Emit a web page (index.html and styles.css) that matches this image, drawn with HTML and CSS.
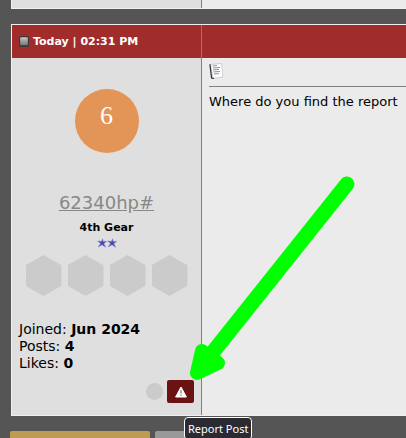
FILE: index.html
```html
<!DOCTYPE html>
<html lang="en">
<head>
    <meta charset="UTF-8">
    <meta name="viewport" content="width=device-width, initial-scale=1.0">
    <title>Forum Thread</title>
    <link rel="stylesheet" href="styles.css">
</head>
<body>
    <main class="thread">
        <div class="post post-previous">
            <div class="user-col"></div>
            <div class="message-col"></div>
        </div>
        <article class="post">
            <header class="post-head">
                <svg class="status-icon" viewBox="0 0 10 11" aria-hidden="true">
                    <defs>
                        <linearGradient id="status" x1="0" y1="0" x2="0" y2="1">
                            <stop offset="0" stop-color="#c8c8c8"/>
                            <stop offset="1" stop-color="#777"/>
                        </linearGradient>
                    </defs>
                    <rect x="0" y="0" width="10" height="11" rx="2" fill="#3a3a3a"/>
                    <rect x="1.2" y="1.2" width="7.6" height="8" rx="1" fill="url(#status)"/>
                </svg>
                <span>Today | 02:31 PM</span>
            </header>
            <div class="post-head"></div>
            <section class="user-col">
                <div class="avatar">6</div>
                <a class="username" href="#">62340hp#</a>
                <div class="rank">4th Gear</div>
                <svg class="stars" viewBox="0 0 20 10" aria-hidden="true">
                    <g fill="#4a4ab0" stroke="#6f6fc8" stroke-width="0.4">
                        <path id="star" d="M5.6 0.8 L6 3.4 L9.6 3.4 L6.8 5.6 L8.6 9.2 L5 6.8 L1.2 9 L3.6 5.4 L0.6 3 L4.4 3.4 Z"/>
                        <use href="#star" x="10"/>
                    </g>
                </svg>
                <div class="badges">
                    <span class="hex"></span>
                    <span class="hex"></span>
                    <span class="hex"></span>
                    <span class="hex"></span>
                </div>
                <div class="user-info">
                    <div>Joined: <b>Jun 2024</b></div>
                    <div>Posts: <b>4</b></div>
                    <div>Likes: <b>0</b></div>
                </div>
                <div class="user-actions">
                    <span class="online-dot"></span>
                    <button type="button" class="report" aria-label="Report Post">
                        <svg viewBox="0 0 12 12" aria-hidden="true">
                            <path d="M6 1 L11.4 11 H0.6 Z" fill="#fff" stroke="#fff" stroke-linejoin="round"/>
                            <path d="M6 4.2 V7.6 M6 8.6 V9.8" stroke="#9a7468" stroke-width="1.3"/>
                        </svg>
                    </button>
                    <div class="tooltip" role="tooltip">Report Post</div>
                </div>
            </section>
            <section class="message-col">
                <svg class="post-icon" viewBox="0 0 16 16" aria-hidden="true">
                    <path d="M1.5 1.5 L12.5 0.5 L14 14 L4 15.5 Z" fill="#fff" stroke="#c4c4cc" stroke-width="0.8"/>
                    <path d="M0.9 1.2 L2.6 15 L5 15.4" fill="none" stroke="#2b2b3a" stroke-width="1.2"/>
                    <path d="M3.5 3 L8 2.6 M4 5 L11 4.4 M4 7 L10 6.4 M4.5 9 L11 8.4 M5 11 L10 10.6" stroke="#85858f" stroke-width="0.9"/>
                </svg>
                <hr>
                <p>Where do you find the report</p>
            </section>
            <svg class="pointer" viewBox="0 0 166 206" aria-hidden="true">
                <g fill="#00ff00" stroke="#00ff00" stroke-linecap="round" stroke-linejoin="round">
                    <path d="M158 8 L20 181" stroke-width="15"/>
                    <path d="M13 175 L29 187 L8 197 Z" stroke-width="14"/>
                </g>
            </svg>
        </article>
        <div class="thread-actions">
            <button type="button" class="reply" aria-label="Reply"></button>
            <button type="button" class="more" aria-label="More"></button>
        </div>
    </main>
</body>
</html>
```

FILE: styles.css
```css
        body {
            margin: 0;
            font-family: Verdana, "DejaVu Sans", sans-serif;
            font-size: 13px;
            line-height: 17px;
            color: #000;
            background-color: #555;
            overflow: hidden;
        }
        .thread {
            padding-left: 11px;
        }
        .post {
            position: relative;
            display: grid;
            grid-template-columns: 190px 1fr;
            border: 1px solid #f0eeee;
            border-right: none;
            margin-bottom: 15px;
            background-color: #ebebeb;
        }
        .post-previous {
            border-top: none;
            height: 8px;
        }
        .post-head {
            display: flex;
            align-items: center;
            gap: 4px;
            height: 33px;
            padding-left: 7px;
            background-color: #a02c2c;
            color: #fff;
            font-size: 11px;
            font-weight: bold;
        }
        header.post-head,
        .user-col {
            border-right: 1px solid #808080;
        }
        .status-icon {
            width: 10px;
            height: 11px;
        }
        .user-col {
            display: flex;
            flex-direction: column;
            align-items: center;
            background-color: #dfdfdf;
        }
        .avatar {
            box-sizing: border-box;
            width: 64px;
            height: 64px;
            margin-top: 31px;
            border-radius: 50%;
            background-color: #e39558;
            color: #fff;
            font-family: "Liberation Serif", serif;
            font-size: 26px;
            line-height: 54px;
            text-align: center;
        }
        .username {
            margin-top: 38px;
            color: #888;
            font-size: 18px;
            line-height: 24px;
        }
        .rank {
            margin-top: 4px;
            font-size: 11px;
            font-weight: bold;
        }
        .stars {
            width: 20px;
            height: 10px;
            margin-top: 2px;
        }
        .badges {
            display: flex;
            gap: 6px;
            margin-top: 7px;
        }
        .hex {
            width: 36px;
            height: 41px;
            background-color: #cbcbcb;
            clip-path: polygon(50% 0, 100% 25%, 100% 75%, 50% 100%, 0 75%, 0 25%);
        }
        .user-info {
            align-self: stretch;
            margin-top: 25px;
            padding-left: 7px;
            font-size: 14px;
        }
        .user-actions {
            position: relative;
            align-self: flex-end;
            display: flex;
            align-items: center;
            gap: 4px;
            margin: 8px 7px 12px 0;
        }
        .online-dot {
            width: 17px;
            height: 17px;
            border-radius: 50%;
            background-color: #cbcbcb;
        }
        .report {
            display: flex;
            align-items: center;
            justify-content: center;
            width: 27px;
            height: 23px;
            padding: 0;
            border: none;
            border-radius: 2px;
            background-color: #6b1313;
            cursor: pointer;
        }
        .report svg {
            width: 12px;
            height: 12px;
        }
        .tooltip {
            position: absolute;
            top: 37px;
            left: 38px;
            z-index: 2;
            padding: 2px 3px;
            border: 1px solid #fff;
            border-radius: 4px;
            background-color: #2b2a33;
            color: #fff;
            font-family: "Noto Sans", "Open Sans", sans-serif;
            font-size: 11px;
            white-space: nowrap;
        }
        .message-col {
            padding-left: 7px;
            white-space: nowrap;
        }
        .post-icon {
            display: block;
            width: 16px;
            height: 16px;
            margin-top: 5px;
        }
        hr {
            margin: 7px 0 6px;
            border: none;
            border-top: 1px solid #808080;
        }
        p {
            margin: 0;
        }
        .pointer {
            position: absolute;
            top: 151px;
            left: 177px;
            width: 166px;
            height: 206px;
        }
        .thread-actions {
            display: flex;
            gap: 5px;
            margin-left: -1px;
        }
        .thread-actions button {
            height: 26px;
            border: none;
            border-radius: 2px;
        }
        .thread-actions .reply {
            width: 140px;
            background-color: #bd9b53;
        }
        .thread-actions .more {
            width: 90px;
            background-color: #999;
        }
```
